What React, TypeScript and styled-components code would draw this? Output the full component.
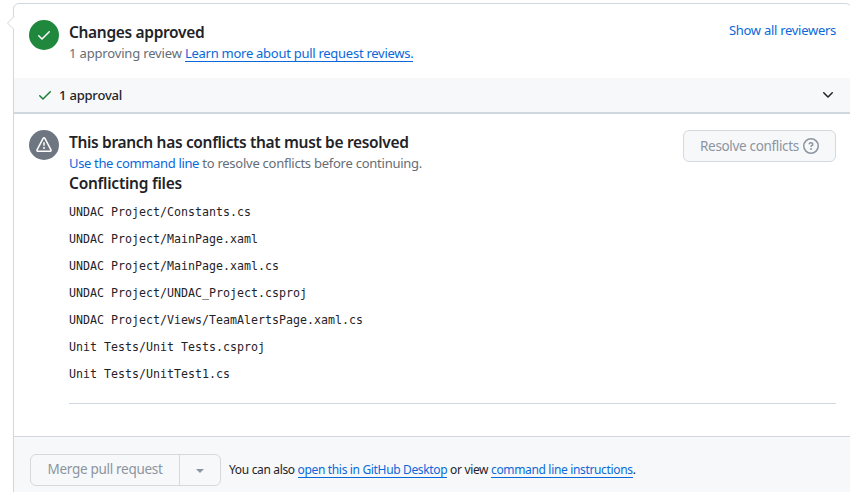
import React from "react";
import styled, { createGlobalStyle } from "styled-components";

const GlobalStyle = createGlobalStyle`
  *, *::before, *::after { box-sizing: border-box; }
  html, body { margin: 0; padding: 0; background: #fff; overflow: hidden; }
  body { font: 14px/21px "Noto Sans", "Open Sans", sans-serif; color: #1f2328; }
  h3, h4, p, ul { margin: 0; padding: 0; }
  button { font: inherit; margin: 0; }
`;

const Page = styled.main`
  height: 492px;
  overflow: hidden;
  padding: 3px 0 0 13px;
`;

const Card = styled.div`
  position: relative;
  width: 839px;
  height: 520px;
  border: 1px solid #d0d7de;
  border-radius: 6px;
`;

const Notch = styled.svg`
  position: absolute;
  left: -8px;
  top: 11px;
  display: block;
`;

const Section = styled.section<{ $height: number }>`
  display: flex;
  align-items: flex-start;
  height: ${(p) => p.$height}px;
  padding: 16px 15px 0;
`;

const StatusCircle = styled.span<{ $color: string }>`
  display: flex;
  flex: none;
  align-items: center;
  justify-content: center;
  width: 30px;
  height: 30px;
  margin-right: 10px;
  border-radius: 50%;
  color: #fff;
  background: ${(p) => p.$color};
`;

const Body = styled.div`
  flex: 1;
  min-width: 0;
`;

const HeadRow = styled.div`
  display: flex;
  justify-content: space-between;
  height: 42px;
`;

const Heading = styled.h3<{ $track?: number }>`
  height: 24px;
  font-size: 15.5px;
  line-height: 25px;
  font-weight: 600;
  white-space: nowrap;
  letter-spacing: ${(p) => p.$track ?? -0.33}px;
`;

const SubHeading = styled(Heading)`
  line-height: 23px;
`;

const Note = styled.p<{ $track?: number }>`
  line-height: 19px;
  color: #656d76;
  font-size: 13px;
  white-space: nowrap;
  letter-spacing: ${(p) => p.$track ?? 0}px;
`;

const Link = styled.a<{ $underline?: boolean; $track?: number }>`
  color: #0969da;
  text-decoration: none;
  letter-spacing: ${(p) => (p.$track === undefined ? "inherit" : `${p.$track}px`)};
  box-shadow: ${(p) => (p.$underline ? "inset 0 -1px 0 #0969da" : "none")};
`;

const NoteLink = styled(Link)`
  display: inline-block;
  height: 18px;
  line-height: 19px;
`;

const SideLink = styled(Link)`
  font-size: 13px;
  line-height: 21px;
  white-space: nowrap;
`;

const ApprovalBar = styled.div`
  display: flex;
  align-items: center;
  height: 36px;
  padding: 0 15px 0 23px;
  background: #f6f8fa;
  border-bottom: 2px solid #d0d7de;
`;

const ApprovalText = styled.span`
  flex: 1;
  margin-left: 6px;
  font-size: 13px;
  font-weight: 500;
  letter-spacing: -0.2px;
`;

const DisabledButton = styled.button`
  display: flex;
  align-items: center;
  justify-content: center;
  height: 32px;
  padding: 0;
  border: 1px solid #d5d9de;
  border-radius: 6px;
  color: #8c959f;
  background: #f6f8fa;
  font-size: 13.5px;
  letter-spacing: -0.3px;
  white-space: nowrap;
`;

const ResolveButton = styled(DisabledButton)`
  width: 153px;
  gap: 4px;
  letter-spacing: -0.33px;
`;

const FileList = styled.ul`
  height: 207px;
  list-style: none;
  padding-top: 3px;
`;

const FileItem = styled.li`
  height: 27px;
  font: 11.63px/27px "DejaVu Sans Mono", monospace;
  white-space: pre;
`;

const Divider = styled.div`
  height: 1px;
  background: #d0d7de;
`;

const Footer = styled.footer`
  display: flex;
  align-items: center;
  height: 84px;
  padding: 0 16px 18px;
  background: #f6f8fa;
  border-top: 1px solid #d0d7de;
`;

const MergeButton = styled(DisabledButton)`
  width: 150px;
  border-radius: 6px 0 0 6px;
`;

const MenuButton = styled(DisabledButton)`
  width: 42px;
  margin-left: -1px;
  border-radius: 0 6px 6px 0;
`;

const FooterText = styled.span`
  margin: 0 0 0 8px;
  font-size: 12px;
  letter-spacing: -0.34px;
  white-space: nowrap;
`;

const ICONS = {
  check:
    "M13.78 4.22a.75.75 0 0 1 0 1.06l-7.25 7.25a.75.75 0 0 1-1.06 0L2.22 9.28a.751.751 0 0 1 .018-1.042.751.751 0 0 1 1.042-.018L6 10.94l6.72-6.72a.75.75 0 0 1 1.06 0Z",
  alert:
    "M6.457 1.047c.659-1.234 2.427-1.234 3.086 0l6.082 11.378A1.75 1.75 0 0 1 14.082 15H1.918a1.75 1.75 0 0 1-1.543-2.575Zm1.763.707a.25.25 0 0 0-.44 0L1.698 13.132a.25.25 0 0 0 .22.368h12.164a.25.25 0 0 0 .22-.368Zm.53 3.996v2.5a.75.75 0 0 1-1.5 0v-2.5a.75.75 0 0 1 1.5 0ZM9 11a1 1 0 1 1-2 0 1 1 0 0 1 2 0Z",
  question:
    "M0 8a8 8 0 1 1 16 0A8 8 0 0 1 0 8Zm8-6.5a6.5 6.5 0 1 0 0 13 6.5 6.5 0 0 0 0-13ZM6.92 6.085h.001a.749.749 0 1 1-1.342-.67c.169-.339.436-.701.849-.977C6.845 4.16 7.369 4 8 4a2.756 2.756 0 0 1 1.637.525c.503.377.863.965.863 1.725 0 .448-.115.83-.329 1.15-.205.307-.47.513-.692.662-.109.072-.22.138-.313.195l-.006.004a6.24 6.24 0 0 0-.26.16.952.952 0 0 0-.276.245.75.75 0 0 1-1.248-.832c.184-.264.42-.489.692-.661.103-.067.207-.132.313-.195l.007-.004c.1-.061.182-.11.258-.161a.969.969 0 0 0 .277-.245C8.96 6.514 9 6.427 9 6.25a.612.612 0 0 0-.262-.525A1.27 1.27 0 0 0 8 5.5c-.369 0-.595.09-.74.187a1.01 1.01 0 0 0-.34.398ZM9 11a1 1 0 1 1-2 0 1 1 0 0 1 2 0Z",
  chevron:
    "M12.78 5.22a.749.749 0 0 1 0 1.06l-4.25 4.25a.749.749 0 0 1-1.06 0L3.22 6.28a.749.749 0 1 1 1.06-1.06L8 8.939l3.72-3.719a.749.749 0 0 1 1.06 0Z",
  triangle:
    "m4.427 7.427 3.396 3.396a.25.25 0 0 0 .354 0l3.396-3.396A.25.25 0 0 0 11.396 7H4.604a.25.25 0 0 0-.177.427Z",
};

const Svg = styled.svg`
  display: block;
  flex: none;
  fill: currentColor;
`;

const GreenSvg = styled(Svg)`
  color: #1a7f37;
`;

function Icon({ name, green }: { name: keyof typeof ICONS; green?: boolean }) {
  const Shape = green ? GreenSvg : Svg;
  return (
    <Shape width="16" height="16" viewBox="0 0 16 16" aria-hidden="true">
      <path d={ICONS[name]} />
    </Shape>
  );
}

const FILES = [
  "UNDAC Project/Constants.cs",
  "UNDAC Project/MainPage.xaml",
  "UNDAC Project/MainPage.xaml.cs",
  "UNDAC Project/UNDAC_Project.csproj",
  "UNDAC Project/Views/TeamAlertsPage.xaml.cs",
  "Unit Tests/Unit Tests.csproj",
  "Unit Tests/UnitTest1.cs",
];

export default function App() {
  return (
    <Page>
      <GlobalStyle />
      <Card>
        <Notch width="9" height="16" viewBox="0 0 9 16">
          <path d="M9 0.5 L1.5 8 L9 15.5" fill="#fff" />
          <path d="M8 1.5 L1.5 8 L8 14.5" fill="none" stroke="#d0d7de" />
        </Notch>
        <Section $height={74}>
          <StatusCircle $color="#1f883d">
            <Icon name="check" />
          </StatusCircle>
          <Body>
            <HeadRow>
              <div>
                <Heading>Changes approved</Heading>
                <Note $track={-0.16}>
                  1 approving review{" "}
                  <NoteLink $underline $track={-0.27}>
                    Learn more about pull request reviews.
                  </NoteLink>
                </Note>
              </div>
              <SideLink $track={-0.28}>Show all reviewers</SideLink>
            </HeadRow>
          </Body>
        </Section>
        <ApprovalBar>
          <Icon name="check" green />
          <ApprovalText>1 approval</ApprovalText>
          <Icon name="chevron" />
        </ApprovalBar>
        <Section $height={322}>
          <StatusCircle $color="#6e7781">
            <Icon name="alert" />
          </StatusCircle>
          <Body>
            <HeadRow>
              <div>
                <Heading>This branch has conflicts that must be resolved</Heading>
                <Note $track={-0.25}>
                  <Link $track={-0.35}>Use the command line</Link> to resolve conflicts before
                  continuing.
                </Note>
              </div>
              <ResolveButton disabled>
                Resolve conflicts
                <Icon name="question" />
              </ResolveButton>
            </HeadRow>
            <SubHeading as="h4" $track={-0.25}>
              Conflicting files
            </SubHeading>
            <FileList>
              {FILES.map((file) => (
                <FileItem key={file}>{file}</FileItem>
              ))}
            </FileList>
            <Divider />
          </Body>
        </Section>
        <Footer>
          <MergeButton disabled>Merge pull request</MergeButton>
          <MenuButton disabled aria-label="Select merge method">
            <Icon name="triangle" />
          </MenuButton>
          <FooterText>
            You can also <Link $underline>open this in GitHub Desktop</Link> or view{" "}
            <Link $underline>command line instructions</Link>.
          </FooterText>
        </Footer>
      </Card>
    </Page>
  );
}
